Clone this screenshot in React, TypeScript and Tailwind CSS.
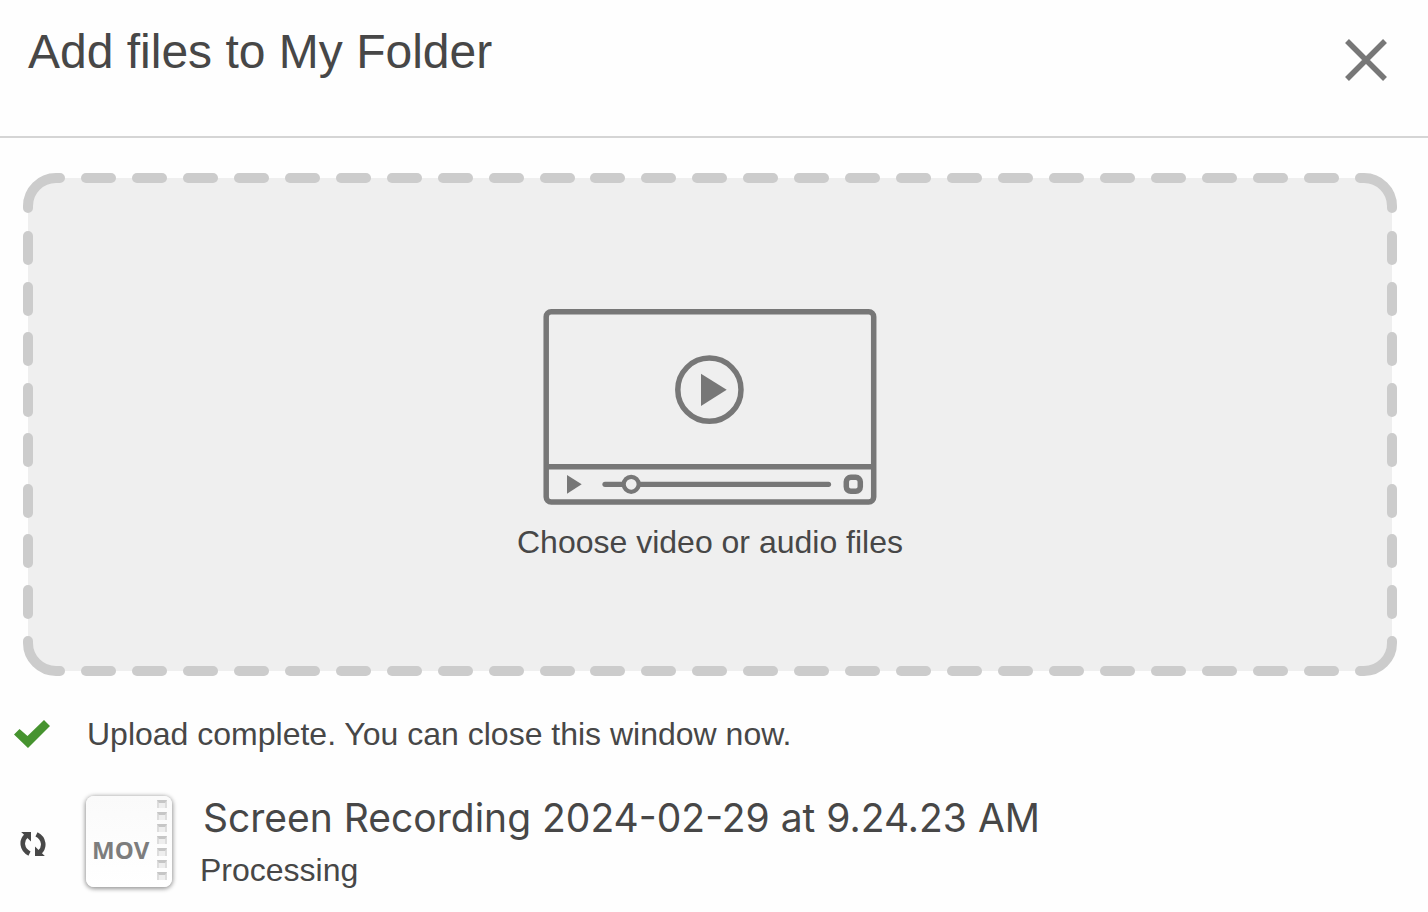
function Corner({ className }: { className: string }) {
  return (
    <svg viewBox="0 0 42 40" className={className} aria-hidden="true">
      <path d="M37 5H33A28 28 0 0 0 5 33V35" fill="none" stroke="#ccc" strokeWidth="10" strokeLinecap="round" />
    </svg>
  );
}

function HorizontalEdge() {
  return (
    <div className="flex h-[10px] flex-1 justify-evenly">
      {Array.from({ length: 25 }, (_, i) => (
        <span key={i} className="h-[10px] w-[35px] rounded-full bg-[#ccc]" />
      ))}
    </div>
  );
}

function VerticalEdge() {
  return (
    <div className="flex w-[10px] flex-col justify-between pt-[18px] pb-[17px]">
      {Array.from({ length: 8 }, (_, i) => (
        <span key={i} className="h-[34px] w-[10px] rounded-full bg-[#ccc]" />
      ))}
    </div>
  );
}

function DashedFrame() {
  return (
    <div className="pointer-events-none absolute -inset-[5px] flex flex-col" aria-hidden="true">
      <div className="flex">
        <Corner className="h-[40px] w-[42px]" />
        <HorizontalEdge />
        <Corner className="h-[40px] w-[42px] -scale-x-100" />
      </div>
      <div className="flex flex-1 justify-between">
        <VerticalEdge />
        <VerticalEdge />
      </div>
      <div className="flex items-end">
        <Corner className="h-[40px] w-[42px] -scale-y-100" />
        <HorizontalEdge />
        <Corner className="h-[40px] w-[42px] -scale-100" />
      </div>
    </div>
  );
}

function PlayerIcon() {
  return (
    <svg viewBox="0 0 334 196" className="h-[196px] w-[334px]" fill="none" stroke="#777" strokeWidth="5.5" aria-hidden="true">
      <rect x="3.2" y="2.8" width="327.5" height="190.3" rx="5" />
      <path d="M4 157.7H330" />
      <circle cx="166.4" cy="80.7" r="31.6" />
      <path d="M158 64.7V97L183.7 80.7Z" fill="#777" stroke="none" />
      <path d="M24 166V184.7L38.7 175.3Z" fill="#777" stroke="none" />
      <path d="M62 175.3H285.5" strokeWidth="5.2" strokeLinecap="round" />
      <circle cx="88.2" cy="175.3" r="7.5" fill="#efefef" strokeWidth="4.2" />
      <rect x="303.3" y="168.3" width="14" height="14" rx="4.5" />
    </svg>
  );
}

function CheckIcon() {
  return (
    <svg viewBox="0 0 38 30" className="h-[30px] w-[38px]" aria-hidden="true">
      <path d="M1 15.5L6.5 10L14.5 17L31 1L37 7L15 29Z" fill="#46932f" />
    </svg>
  );
}

function SyncIcon() {
  return (
    <svg viewBox="0 0 26 26" className="h-[26px] w-[26px]" aria-hidden="true">
      <path d="M9.5 22.6C1.5 18.5 .8 9.5 6.5 4.5" fill="none" stroke="#484848" strokeWidth="4.6" />
      <path d="M1.2 1H11V10.5Z" fill="#484848" />
      <path d="M16.5 3.4C24.5 7.5 25.2 16.5 19.5 21.5" fill="none" stroke="#484848" strokeWidth="4.6" />
      <path d="M24.8 25H15V15.5Z" fill="#484848" />
    </svg>
  );
}

function MovIcon() {
  return (
    <div className="flex h-[91px] w-[86px] justify-between rounded-[8px] bg-linear-to-b from-[#fafafa] to-white pr-[5px] pl-[6px] shadow-[0_1px_4px_1px_rgba(0,0,0,0.4)]">
      <span className="self-end pb-[22px] font-['Open_Sans','Noto_Sans',sans-serif] text-[24px] leading-[30px] font-bold text-[#7d7d7d]">
        MOV
      </span>
      <span className="flex flex-col gap-[4px] pt-[4px]" aria-hidden="true">
        {Array.from({ length: 7 }, (_, i) => (
          <span key={i} className="h-[8px] w-[10px] border-x-2 border-t-3 border-x-[#ddd] border-t-[#c6c6c6] bg-[#eee]" />
        ))}
      </span>
    </div>
  );
}

export default function App() {
  return (
    <main className="min-h-screen bg-[#fefefe] font-['Liberation_Sans',Arial,sans-serif] text-[#474747]">
      <header className="flex items-start justify-between border-b-2 border-[#d5d5d5] pt-6 pr-[41px] pb-[55px] pl-7">
        <h1 className="text-[48px] leading-[56px]">Add files to My Folder</h1>
        <button type="button" aria-label="Close" className="mt-[15px]">
          <svg viewBox="0 0 42 42" className="size-[42px]" aria-hidden="true">
            <path d="M2 2L40 40M40 2L2 40" stroke="#777" strokeWidth="5.5" />
          </svg>
        </button>
      </header>

      <label className="relative mt-10 mr-9 ml-7 flex cursor-pointer flex-col items-center rounded-[28px] bg-[#efefef] pt-[131px] pb-[110px]">
        <DashedFrame />
        <input type="file" multiple accept="video/*,audio/*" className="sr-only" />
        <PlayerIcon />
        <span className="mt-[18px] text-[32px] leading-[38px]">Choose video or audio files</span>
      </label>

      <div className="mt-[44px] flex items-center gap-[36px] pl-[13px]">
        <CheckIcon />
        <p className="text-[32px] leading-[38px]">Upload complete. You can close this window now.</p>
      </div>

      <div className="mt-[39px] flex pl-[20px]">
        <div className="mt-[39px]">
          <SyncIcon />
        </div>
        <div className="mt-[4px] ml-[40px]">
          <MovIcon />
        </div>
        <div className="ml-7">
          <p className="pl-[3px] font-[Inter,sans-serif] text-[39px] leading-[52px]">Screen Recording 2024-02-29 at 9.24.23 AM</p>
          <p className="text-[32px] leading-[52px]">Processing</p>
        </div>
      </div>
    </main>
  );
}
